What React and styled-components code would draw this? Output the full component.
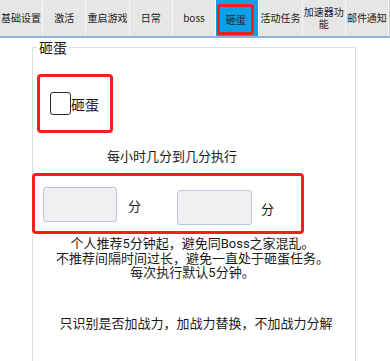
import React from "react";
import styled, { createGlobalStyle } from "styled-components";

const Global = createGlobalStyle`
  html, body { margin: 0; padding: 0; background: #fff; }
  body { font-family: Roboto, "Noto Sans CJK SC", sans-serif; color: #1a1a1a; }
  * { box-sizing: border-box; }
`;

const Page = styled.div`
  width: 390px;
  height: 361px;
  overflow: hidden;
  background: #fff;
`;

const TabBar = styled.div`
  display: grid;
  grid-template-columns: repeat(9, 1fr);
  width: 390px;
  height: 38px;
  background: #e6e6e6;
  border-bottom: 2px solid #8db0e6;
  border-right: 1px solid #c8c8c8;
`;

const Tab = styled.div`
  display: flex;
  align-items: stretch;
  border-right: 1px solid #f6f6f6;
  background: ${(p) => (p.$active ? "#0ca1e6" : "transparent")};
  padding: ${(p) => (p.$active ? "4px 4px 1px 1px" : "0 1px")};
`;

const TabLabel = styled.span`
  flex: 1;
  display: flex;
  align-items: center;
  justify-content: center;
  text-align: center;
  font-family: "Noto Sans CJK SC", sans-serif;
  font-size: 10px;
  line-height: 12px;
  color: #222;
  border: ${(p) => (p.$marked ? "3px solid #f0201c" : "none")};
  border-radius: 3px;
`;

const Group = styled.fieldset`
  margin: 2px 0 0 32px;
  width: 324px;
  min-height: 340px;
  padding: 0;
  border: 1px solid #dedede;
  border-bottom: none;
`;

const Legend = styled.legend`
  margin-left: 4px;
  padding: 0 2px;
  font-family: "Noto Sans CJK SC", sans-serif;
  font-size: 14px;
  line-height: 14px;
  color: #1a1a1a;
`;

const Mark = styled.div`
  border: 3px solid #f0201c;
  border-radius: 4px;
`;

const CheckMark = styled(Mark)`
  margin: 20px 0 0 4px;
  width: 76px;
  height: 59px;
  display: flex;
  align-items: center;
  padding-left: 10px;
`;

const Box = styled.span`
  width: 21px;
  height: 23px;
  border: 1.5px solid #2a2a2a;
  border-radius: 3px;
  background: #fff;
`;

const CheckText = styled.span`
  font-family: "Noto Sans CJK SC", sans-serif;
  font-size: 14px;
  line-height: 16px;
  color: #1a1a1a;
`;

const Caption = styled.div`
  margin-top: 14px;
  padding-left: 74px;
  font-size: 13px;
  line-height: 19px;
`;

const InputMark = styled(Mark)`
  margin: 7px 0 0 -1px;
  width: 272px;
  height: 61px;
  display: flex;
  align-items: flex-start;
  padding: 11px 0 0 8px;
`;

const Field = styled.div`
  display: flex;
  align-items: center;
  margin-top: ${(p) => p.$offset || 0}px;
  margin-left: ${(p) => p.$left || 0}px;
  gap: ${(p) => p.$gap}px;
`;

const Input = styled.div`
  width: ${(p) => p.$w}px;
  height: ${(p) => p.$h}px;
  background: #f0f0f0;
  border: 1.5px solid #bac6d8;
  border-radius: 3px;
`;

const Unit = styled.span`
  font-size: 13px;
  line-height: 16px;
  padding-top: 4px;
`;

const Notes = styled.div`
  margin-top: 3px;
  padding-right: 3px;
  text-align: center;
  font-size: 13px;
  line-height: 14.5px;
`;

const Footer = styled.div`
  margin-top: 35px;
  padding-left: 4px;
  text-align: center;
  font-size: 13px;
  line-height: 16px;
`;

const tabs = ["基础设置", "激活", "重启游戏", "日常", "boss", "砸蛋", "活动任务", "加速器功能", "邮件通知"];

export default function App() {
  return (
    <Page>
      <Global />
      <TabBar>
        {tabs.map((t) => (
          <Tab key={t} $active={t === "砸蛋"}>
            <TabLabel $marked={t === "砸蛋"}>{t}</TabLabel>
          </Tab>
        ))}
      </TabBar>
      <Group>
        <Legend>砸蛋</Legend>
        <CheckMark>
          <Box />
          <CheckText>砸蛋</CheckText>
        </CheckMark>
        <Caption>每小时几分到几分执行</Caption>
        <InputMark>
          <Field $gap={11}>
            <Input $w={74} $h={35} />
            <Unit>分</Unit>
          </Field>
          <Field $gap={9} $offset={3} $left={36}>
            <Input $w={75} $h={35} />
            <Unit>分</Unit>
          </Field>
        </InputMark>
        <Notes>
          个人推荐5分钟起，避免同Boss之家混乱。
          <br />
          不推荐间隔时间过长，避免一直处于砸蛋任务。
          <br />
          每次执行默认5分钟。
        </Notes>
        <Footer>只识别是否加战力，加战力替换，不加战力分解</Footer>
      </Group>
    </Page>
  );
}
